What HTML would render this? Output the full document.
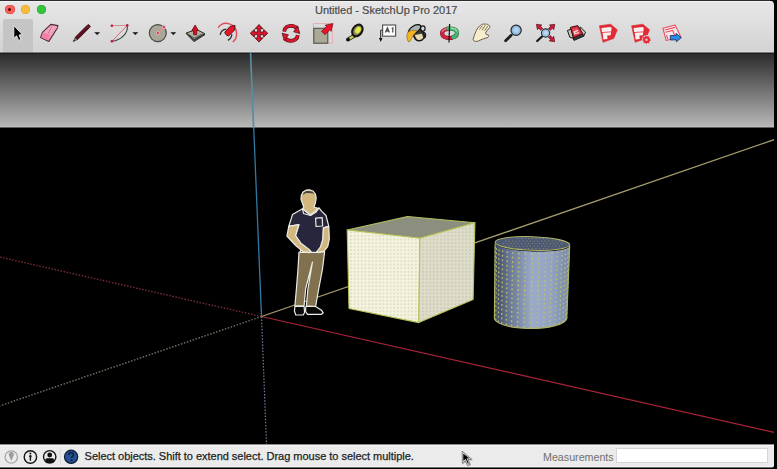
<!DOCTYPE html>
<html><head><meta charset="utf-8">
<style>
html,body{margin:0;padding:0;width:777px;height:469px;overflow:hidden;background:#000;font-family:"Liberation Sans",sans-serif;}
#row0{position:absolute;left:0;top:0;width:770px;height:1px;background:#2e2e2e;}
#win{position:absolute;left:0;top:1px;width:774px;height:467px;border-radius:0 4px 3px 0;overflow:hidden;background:#000;}
#top{position:absolute;left:0;top:0;width:774px;height:51px;background:linear-gradient(#e7e7e7,#d3d3d3);}
#tophl{position:absolute;left:0;top:0;width:774px;height:1px;background:#f2f2f2;}
#tophl2{position:absolute;left:0;top:50px;width:774px;height:1px;background:#dcdcdc;}
#title{position:absolute;left:315px;top:3px;font-size:11px;color:#4b4b4b;white-space:nowrap;-webkit-text-stroke:0.2px #4b4b4b;}
.tl{position:absolute;top:3.9px;width:9.6px;height:9.6px;border-radius:50%;}
#sel{position:absolute;left:2.5px;top:18px;width:30.5px;height:33px;border-radius:2px 2px 0 0;background:#c5c5c5;}
#status{position:absolute;left:0;top:443px;width:774px;height:24px;background:linear-gradient(#8a8a8a 0,#8a8a8a 1px,#f6f6f6 1px,#f6f6f6 2px,#ebebeb 2px,#ebebeb 22px,#f6f6f6 22px,#f6f6f6 23px,#6a6a6a 23px);}
#stext{position:absolute;left:84.6px;top:6.4px;font-size:11px;color:#1e1e1e;white-space:nowrap;-webkit-text-stroke:0.25px #1e1e1e;letter-spacing:-0.022px;}
#mtext{position:absolute;left:543px;top:7px;font-size:10.7px;color:#707070;white-space:nowrap;}
#mbox{position:absolute;left:616.5px;top:4.5px;width:150px;height:13.5px;background:#fff;box-shadow:0 0 0 1px #d4d4d4;}
svg{position:absolute;left:0;top:0;}
</style></head><body>
<div id="row0"></div>
<div id="win">
  <div id="top">
    <div id="tophl"></div><div id="tophl2"></div>
    <div class="tl" style="left:5px;background:#f8605a;box-shadow:inset 0 0 0 0.6px #e0443e;"><div style="position:absolute;left:3.1px;top:3.1px;width:3.4px;height:3.4px;border-radius:50%;background:#5a0606;"></div></div>
    <div class="tl" style="left:20.9px;background:#fbbb3a;box-shadow:inset 0 0 0 0.6px #dea030;"></div>
    <div class="tl" style="left:36.7px;background:#34c43e;box-shadow:inset 0 0 0 0.6px #24a830;"></div>
    <div id="title">Untitled - SketchUp Pro 2017</div>
    <div id="sel"></div>
  </div>
  <div id="status">
    <div id="stext">Select objects. Shift to extend select. Drag mouse to select multiple.</div>
    <div id="mtext">Measurements</div>
    <div id="mbox"></div>
  </div>
</div>
<svg id="scene" width="777" height="469" viewBox="0 0 777 469" style="position:absolute;left:0;top:0">
<defs>
<clipPath id="vpc"><rect x="0" y="52" width="774" height="392"/></clipPath>
<linearGradient id="skyg" x1="0" y1="0" x2="0" y2="1"><stop offset="0" stop-color="#2c2c2c"/><stop offset="1" stop-color="#b6b6b6"/></linearGradient>
<pattern id="dots" width="3.6" height="3.6" patternUnits="userSpaceOnUse"><circle cx="1.8" cy="1.8" r="0.6" fill="#8a8a70"/></pattern>
<pattern id="cdots" width="4.6" height="4.4" patternUnits="userSpaceOnUse"><circle cx="2.3" cy="2.2" r="0.8" fill="#b8c070"/></pattern>
<linearGradient id="cylg" x1="0" y1="0" x2="1" y2="0"><stop offset="0" stop-color="#3e4862"/><stop offset="0.2" stop-color="#6a7894"/><stop offset="0.5" stop-color="#9aaac8"/><stop offset="0.75" stop-color="#94a4c2"/><stop offset="1" stop-color="#7888a8"/></linearGradient>
</defs>
<g clip-path="url(#vpc)">
<rect x="0" y="52" width="774" height="392" fill="#000"/>
<rect x="0" y="52" width="774" height="1" fill="#7a7a7a"/>
<rect x="0" y="53" width="774" height="1" fill="#1e1e1e"/>
<rect x="0" y="54" width="774" height="72" fill="url(#skyg)"/>
<rect x="0" y="126" width="774" height="1" fill="#bcbcbc"/>
<rect x="0" y="127" width="774" height="1" fill="#5e5e5e"/>
<!-- axes -->
<line x1="261.5" y1="316.5" x2="253.7" y2="127.5" stroke="#3378a4" stroke-width="1.3"/>
<line x1="253.6" y1="128" x2="250.5" y2="52" stroke="#5a8ca0" stroke-width="1.7"/>
<line x1="261.5" y1="316.5" x2="774" y2="432.3" stroke="#a82438" stroke-width="1.2"/>
<line x1="261.5" y1="316.5" x2="774" y2="139.7" stroke="#a49c6c" stroke-width="1.3"/>
<line x1="261.5" y1="316.5" x2="0" y2="257.1" stroke="#80303a" stroke-width="1.3" stroke-dasharray="1.5 1.6"/>
<line x1="261.5" y1="316.5" x2="0" y2="405.9" stroke="#7c7a6c" stroke-width="1.3" stroke-dasharray="1.5 1.6"/>
<line x1="261.5" y1="316.5" x2="266.5" y2="444" stroke="#74819a" stroke-width="1.2" stroke-dasharray="1.5 1.6"/>
</g>
<!-- person -->
<g stroke="#ecece6" stroke-width="1.2" stroke-linejoin="round">
<path d="M299,252 L298,269 L296.4,289 L294.9,305.8 L304.1,305.8 L305.6,289 L312.5,262 L307.9,289 L306.4,305.8 L315.6,306.5 L318.7,289 L322.5,269 L324.6,251.6 Z" fill="#82714e"/>
<path d="M294.9,306.5 L304.1,306.5 L304.6,312.5 L303.2,315 L295.8,315 L294.4,311 Z" fill="#080808"/>
<path d="M305.8,306.5 L315.6,306.5 L321.5,310.2 L323.2,312.8 L321.5,314.3 L307.5,314.3 L305.6,311.5 Z" fill="#080808"/>
<path d="M292.5,214.6 L302.5,208.8 L310.5,215 L319,207.8 L321.3,210.9 L326,215.5 L328.8,226.3 L323.4,227.9 L322.9,239.2 L321.5,247 L320,252.4 L300.5,252.4 L300.6,243 L295.5,235.5 L298.9,224.7 L288.8,226.3 Z" fill="#27263c"/>
<path d="M288.8,226.3 L298.9,224.7 L295.5,235.5 L300.6,243 L308.5,249 L311,251.5 L309,252.6 L303,251.6 L295.7,245.5 L286.9,236 Z" fill="#d2b87f"/>
<path d="M323.4,227.9 L328.8,226.3 L329.3,239.1 L327.7,246.6 L324.2,251 L318.5,252.6 L316.8,251.5 L320.4,247 L322.9,239.2 Z" fill="#d2b87f"/>
<path d="M303.8,207.2 L302.2,202.5 L301,199.5 L301.3,195.5 L303,192 L306,190.2 L309.5,189.8 L313,191 L315.4,194 L316.2,198 L315.5,202.5 L314,207 L318.6,208.5 L310.5,215 L302.5,208.8 Z" fill="#d2b87f"/>
<path d="M302.5,208.8 L303.5,213.5 L310.5,215.5 L316.2,212 L318.6,208.2" fill="none"/>
<path d="M315.6,218.2 L322.2,217.6 L322.6,226 L316,226.5 Z" fill="#27263c"/>
</g>
<path d="M302.6,195 L303.8,192.4 L306.4,191.1 L309.6,190.9 L312.8,191.8 L314.6,194.4 L312.5,193.2 L306,193 Z" fill="#4a443a"/>
<!-- cube -->
<g stroke="#b8c05a" stroke-width="1.1" stroke-linejoin="round">
<path d="M347.2,230 L407.5,216.5 L474.9,222.8 L419.9,238.2 Z" fill="#8c8e7e"/>
<path d="M347.2,230 L419.9,238.2 L418.8,322.6 L349,308.5 Z" fill="#f4f4de"/>
<path d="M419.9,238.2 L474.9,222.8 L473.1,299.6 L418.8,322.6 Z" fill="#deddca"/>
</g>
<g fill="url(#dots)" opacity="0.55">
<path d="M348,231 L419.2,239 L418.2,321.6 L349.6,307.6 Z"/>
<path d="M420.6,239 L474.2,224 L472.4,299 L419.4,321.6 Z"/>
</g>
<!-- cylinder -->
<path d="M495.1,243.4 L494.4,316.8 A36.2,10.8 0 0 0 566.8,318.5 L569.7,245.7 A37.3,6.8 2 0 1 495.1,243.4 Z" fill="url(#cylg)"/>
<g fill="#bcc26c" opacity="0.9"><ellipse cx="495.2" cy="247.7" rx="0.60" ry="1.05"/><ellipse cx="495.2" cy="252.1" rx="0.60" ry="1.05"/><ellipse cx="495.2" cy="256.5" rx="0.60" ry="1.05"/><ellipse cx="495.1" cy="260.8" rx="0.60" ry="1.05"/><ellipse cx="495.1" cy="265.2" rx="0.60" ry="1.05"/><ellipse cx="495.0" cy="269.5" rx="0.60" ry="1.05"/><ellipse cx="495.0" cy="273.9" rx="0.60" ry="1.05"/><ellipse cx="494.9" cy="278.3" rx="0.60" ry="1.05"/><ellipse cx="494.9" cy="282.6" rx="0.60" ry="1.05"/><ellipse cx="494.9" cy="287.0" rx="0.60" ry="1.05"/><ellipse cx="494.8" cy="291.3" rx="0.60" ry="1.05"/><ellipse cx="494.8" cy="295.7" rx="0.60" ry="1.05"/><ellipse cx="494.7" cy="300.1" rx="0.60" ry="1.05"/><ellipse cx="494.7" cy="304.4" rx="0.60" ry="1.05"/><ellipse cx="494.6" cy="308.8" rx="0.60" ry="1.05"/><ellipse cx="494.6" cy="313.1" rx="0.60" ry="1.05"/><ellipse cx="494.6" cy="317.5" rx="0.60" ry="1.05"/><ellipse cx="496.5" cy="249.0" rx="0.67" ry="1.05"/><ellipse cx="496.5" cy="253.4" rx="0.67" ry="1.05"/><ellipse cx="496.4" cy="257.8" rx="0.67" ry="1.05"/><ellipse cx="496.4" cy="262.2" rx="0.67" ry="1.05"/><ellipse cx="496.3" cy="266.6" rx="0.67" ry="1.05"/><ellipse cx="496.3" cy="271.0" rx="0.67" ry="1.05"/><ellipse cx="496.2" cy="275.4" rx="0.67" ry="1.05"/><ellipse cx="496.2" cy="279.8" rx="0.67" ry="1.05"/><ellipse cx="496.1" cy="284.2" rx="0.67" ry="1.05"/><ellipse cx="496.1" cy="288.6" rx="0.67" ry="1.05"/><ellipse cx="496.1" cy="293.0" rx="0.67" ry="1.05"/><ellipse cx="496.0" cy="297.4" rx="0.67" ry="1.05"/><ellipse cx="496.0" cy="301.8" rx="0.67" ry="1.05"/><ellipse cx="495.9" cy="306.2" rx="0.67" ry="1.05"/><ellipse cx="495.9" cy="310.6" rx="0.67" ry="1.05"/><ellipse cx="495.8" cy="315.0" rx="0.67" ry="1.05"/><ellipse cx="495.8" cy="319.4" rx="0.67" ry="1.05"/><ellipse cx="499.0" cy="250.2" rx="0.74" ry="1.05"/><ellipse cx="498.9" cy="254.6" rx="0.74" ry="1.05"/><ellipse cx="498.9" cy="259.1" rx="0.74" ry="1.05"/><ellipse cx="498.8" cy="263.5" rx="0.74" ry="1.05"/><ellipse cx="498.8" cy="268.0" rx="0.74" ry="1.05"/><ellipse cx="498.7" cy="272.4" rx="0.74" ry="1.05"/><ellipse cx="498.7" cy="276.8" rx="0.74" ry="1.05"/><ellipse cx="498.6" cy="281.3" rx="0.74" ry="1.05"/><ellipse cx="498.6" cy="285.7" rx="0.74" ry="1.05"/><ellipse cx="498.5" cy="290.2" rx="0.74" ry="1.05"/><ellipse cx="498.5" cy="294.6" rx="0.74" ry="1.05"/><ellipse cx="498.4" cy="299.0" rx="0.74" ry="1.05"/><ellipse cx="498.4" cy="303.5" rx="0.74" ry="1.05"/><ellipse cx="498.4" cy="307.9" rx="0.74" ry="1.05"/><ellipse cx="498.3" cy="312.4" rx="0.74" ry="1.05"/><ellipse cx="498.3" cy="316.8" rx="0.74" ry="1.05"/><ellipse cx="498.2" cy="321.2" rx="0.74" ry="1.05"/><ellipse cx="502.6" cy="251.3" rx="0.78" ry="1.05"/><ellipse cx="502.5" cy="255.8" rx="0.78" ry="1.05"/><ellipse cx="502.5" cy="260.2" rx="0.78" ry="1.05"/><ellipse cx="502.4" cy="264.7" rx="0.78" ry="1.05"/><ellipse cx="502.4" cy="269.2" rx="0.78" ry="1.05"/><ellipse cx="502.3" cy="273.7" rx="0.78" ry="1.05"/><ellipse cx="502.3" cy="278.1" rx="0.78" ry="1.05"/><ellipse cx="502.2" cy="282.6" rx="0.78" ry="1.05"/><ellipse cx="502.2" cy="287.1" rx="0.78" ry="1.05"/><ellipse cx="502.1" cy="291.6" rx="0.78" ry="1.05"/><ellipse cx="502.1" cy="296.0" rx="0.78" ry="1.05"/><ellipse cx="502.0" cy="300.5" rx="0.78" ry="1.05"/><ellipse cx="501.9" cy="305.0" rx="0.78" ry="1.05"/><ellipse cx="501.9" cy="309.5" rx="0.78" ry="1.05"/><ellipse cx="501.8" cy="313.9" rx="0.78" ry="1.05"/><ellipse cx="501.8" cy="318.4" rx="0.78" ry="1.05"/><ellipse cx="501.7" cy="322.9" rx="0.78" ry="1.05"/><ellipse cx="507.2" cy="252.2" rx="0.84" ry="1.05"/><ellipse cx="507.2" cy="256.7" rx="0.84" ry="1.05"/><ellipse cx="507.1" cy="261.2" rx="0.84" ry="1.05"/><ellipse cx="507.0" cy="265.7" rx="0.84" ry="1.05"/><ellipse cx="507.0" cy="270.3" rx="0.84" ry="1.05"/><ellipse cx="506.9" cy="274.8" rx="0.84" ry="1.05"/><ellipse cx="506.9" cy="279.3" rx="0.84" ry="1.05"/><ellipse cx="506.8" cy="283.8" rx="0.84" ry="1.05"/><ellipse cx="506.7" cy="288.3" rx="0.84" ry="1.05"/><ellipse cx="506.7" cy="292.8" rx="0.84" ry="1.05"/><ellipse cx="506.6" cy="297.3" rx="0.84" ry="1.05"/><ellipse cx="506.5" cy="301.8" rx="0.84" ry="1.05"/><ellipse cx="506.5" cy="306.3" rx="0.84" ry="1.05"/><ellipse cx="506.4" cy="310.8" rx="0.84" ry="1.05"/><ellipse cx="506.4" cy="315.3" rx="0.84" ry="1.05"/><ellipse cx="506.3" cy="319.8" rx="0.84" ry="1.05"/><ellipse cx="506.2" cy="324.3" rx="0.84" ry="1.05"/><ellipse cx="512.7" cy="253.0" rx="0.87" ry="1.05"/><ellipse cx="512.6" cy="257.5" rx="0.87" ry="1.05"/><ellipse cx="512.6" cy="262.1" rx="0.87" ry="1.05"/><ellipse cx="512.5" cy="266.6" rx="0.87" ry="1.05"/><ellipse cx="512.4" cy="271.1" rx="0.87" ry="1.05"/><ellipse cx="512.4" cy="275.7" rx="0.87" ry="1.05"/><ellipse cx="512.3" cy="280.2" rx="0.87" ry="1.05"/><ellipse cx="512.2" cy="284.7" rx="0.87" ry="1.05"/><ellipse cx="512.1" cy="289.3" rx="0.87" ry="1.05"/><ellipse cx="512.1" cy="293.8" rx="0.87" ry="1.05"/><ellipse cx="512.0" cy="298.3" rx="0.87" ry="1.05"/><ellipse cx="511.9" cy="302.8" rx="0.87" ry="1.05"/><ellipse cx="511.8" cy="307.4" rx="0.87" ry="1.05"/><ellipse cx="511.8" cy="311.9" rx="0.87" ry="1.05"/><ellipse cx="511.7" cy="316.4" rx="0.87" ry="1.05"/><ellipse cx="511.6" cy="321.0" rx="0.87" ry="1.05"/><ellipse cx="511.6" cy="325.5" rx="0.87" ry="1.05"/><ellipse cx="518.9" cy="253.6" rx="0.91" ry="1.05"/><ellipse cx="518.8" cy="258.1" rx="0.91" ry="1.05"/><ellipse cx="518.7" cy="262.7" rx="0.91" ry="1.05"/><ellipse cx="518.6" cy="267.2" rx="0.91" ry="1.05"/><ellipse cx="518.5" cy="271.8" rx="0.91" ry="1.05"/><ellipse cx="518.5" cy="276.3" rx="0.91" ry="1.05"/><ellipse cx="518.4" cy="280.9" rx="0.91" ry="1.05"/><ellipse cx="518.3" cy="285.4" rx="0.91" ry="1.05"/><ellipse cx="518.2" cy="290.0" rx="0.91" ry="1.05"/><ellipse cx="518.1" cy="294.5" rx="0.91" ry="1.05"/><ellipse cx="518.0" cy="299.1" rx="0.91" ry="1.05"/><ellipse cx="518.0" cy="303.6" rx="0.91" ry="1.05"/><ellipse cx="517.9" cy="308.2" rx="0.91" ry="1.05"/><ellipse cx="517.8" cy="312.7" rx="0.91" ry="1.05"/><ellipse cx="517.7" cy="317.3" rx="0.91" ry="1.05"/><ellipse cx="517.6" cy="321.8" rx="0.91" ry="1.05"/><ellipse cx="517.5" cy="326.4" rx="0.91" ry="1.05"/><ellipse cx="525.5" cy="253.9" rx="0.92" ry="1.05"/><ellipse cx="525.4" cy="258.5" rx="0.92" ry="1.05"/><ellipse cx="525.3" cy="263.0" rx="0.92" ry="1.05"/><ellipse cx="525.2" cy="267.6" rx="0.92" ry="1.05"/><ellipse cx="525.1" cy="272.2" rx="0.92" ry="1.05"/><ellipse cx="525.0" cy="276.7" rx="0.92" ry="1.05"/><ellipse cx="524.9" cy="281.3" rx="0.92" ry="1.05"/><ellipse cx="524.8" cy="285.9" rx="0.92" ry="1.05"/><ellipse cx="524.7" cy="290.4" rx="0.92" ry="1.05"/><ellipse cx="524.6" cy="295.0" rx="0.92" ry="1.05"/><ellipse cx="524.5" cy="299.5" rx="0.92" ry="1.05"/><ellipse cx="524.4" cy="304.1" rx="0.92" ry="1.05"/><ellipse cx="524.3" cy="308.7" rx="0.92" ry="1.05"/><ellipse cx="524.3" cy="313.2" rx="0.92" ry="1.05"/><ellipse cx="524.2" cy="317.8" rx="0.92" ry="1.05"/><ellipse cx="524.1" cy="322.3" rx="0.92" ry="1.05"/><ellipse cx="524.0" cy="326.9" rx="0.92" ry="1.05"/><ellipse cx="532.3" cy="254.0" rx="0.93" ry="1.05"/><ellipse cx="532.2" cy="258.6" rx="0.93" ry="1.05"/><ellipse cx="532.1" cy="263.2" rx="0.93" ry="1.05"/><ellipse cx="532.0" cy="267.7" rx="0.93" ry="1.05"/><ellipse cx="531.9" cy="272.3" rx="0.93" ry="1.05"/><ellipse cx="531.8" cy="276.9" rx="0.93" ry="1.05"/><ellipse cx="531.7" cy="281.4" rx="0.93" ry="1.05"/><ellipse cx="531.6" cy="286.0" rx="0.93" ry="1.05"/><ellipse cx="531.5" cy="290.6" rx="0.93" ry="1.05"/><ellipse cx="531.4" cy="295.1" rx="0.93" ry="1.05"/><ellipse cx="531.3" cy="299.7" rx="0.93" ry="1.05"/><ellipse cx="531.2" cy="304.3" rx="0.93" ry="1.05"/><ellipse cx="531.0" cy="308.8" rx="0.93" ry="1.05"/><ellipse cx="530.9" cy="313.4" rx="0.93" ry="1.05"/><ellipse cx="530.8" cy="318.0" rx="0.93" ry="1.05"/><ellipse cx="530.7" cy="322.5" rx="0.93" ry="1.05"/><ellipse cx="530.6" cy="327.1" rx="0.93" ry="1.05"/><ellipse cx="539.2" cy="253.9" rx="0.92" ry="1.05"/><ellipse cx="539.1" cy="258.5" rx="0.92" ry="1.05"/><ellipse cx="538.9" cy="263.0" rx="0.92" ry="1.05"/><ellipse cx="538.8" cy="267.6" rx="0.92" ry="1.05"/><ellipse cx="538.7" cy="272.2" rx="0.92" ry="1.05"/><ellipse cx="538.6" cy="276.7" rx="0.92" ry="1.05"/><ellipse cx="538.5" cy="281.3" rx="0.92" ry="1.05"/><ellipse cx="538.3" cy="285.9" rx="0.92" ry="1.05"/><ellipse cx="538.2" cy="290.4" rx="0.92" ry="1.05"/><ellipse cx="538.1" cy="295.0" rx="0.92" ry="1.05"/><ellipse cx="538.0" cy="299.5" rx="0.92" ry="1.05"/><ellipse cx="537.9" cy="304.1" rx="0.92" ry="1.05"/><ellipse cx="537.8" cy="308.7" rx="0.92" ry="1.05"/><ellipse cx="537.6" cy="313.2" rx="0.92" ry="1.05"/><ellipse cx="537.5" cy="317.8" rx="0.92" ry="1.05"/><ellipse cx="537.4" cy="322.3" rx="0.92" ry="1.05"/><ellipse cx="537.3" cy="326.9" rx="0.92" ry="1.05"/><ellipse cx="545.8" cy="253.6" rx="0.91" ry="1.05"/><ellipse cx="545.7" cy="258.1" rx="0.91" ry="1.05"/><ellipse cx="545.5" cy="262.7" rx="0.91" ry="1.05"/><ellipse cx="545.4" cy="267.2" rx="0.91" ry="1.05"/><ellipse cx="545.3" cy="271.8" rx="0.91" ry="1.05"/><ellipse cx="545.1" cy="276.3" rx="0.91" ry="1.05"/><ellipse cx="545.0" cy="280.9" rx="0.91" ry="1.05"/><ellipse cx="544.9" cy="285.4" rx="0.91" ry="1.05"/><ellipse cx="544.7" cy="290.0" rx="0.91" ry="1.05"/><ellipse cx="544.6" cy="294.5" rx="0.91" ry="1.05"/><ellipse cx="544.5" cy="299.1" rx="0.91" ry="1.05"/><ellipse cx="544.4" cy="303.6" rx="0.91" ry="1.05"/><ellipse cx="544.2" cy="308.2" rx="0.91" ry="1.05"/><ellipse cx="544.1" cy="312.7" rx="0.91" ry="1.05"/><ellipse cx="544.0" cy="317.3" rx="0.91" ry="1.05"/><ellipse cx="543.8" cy="321.8" rx="0.91" ry="1.05"/><ellipse cx="543.7" cy="326.4" rx="0.91" ry="1.05"/><ellipse cx="552.0" cy="253.0" rx="0.87" ry="1.05"/><ellipse cx="551.8" cy="257.5" rx="0.87" ry="1.05"/><ellipse cx="551.7" cy="262.1" rx="0.87" ry="1.05"/><ellipse cx="551.5" cy="266.6" rx="0.87" ry="1.05"/><ellipse cx="551.4" cy="271.1" rx="0.87" ry="1.05"/><ellipse cx="551.2" cy="275.7" rx="0.87" ry="1.05"/><ellipse cx="551.1" cy="280.2" rx="0.87" ry="1.05"/><ellipse cx="551.0" cy="284.7" rx="0.87" ry="1.05"/><ellipse cx="550.8" cy="289.3" rx="0.87" ry="1.05"/><ellipse cx="550.7" cy="293.8" rx="0.87" ry="1.05"/><ellipse cx="550.5" cy="298.3" rx="0.87" ry="1.05"/><ellipse cx="550.4" cy="302.8" rx="0.87" ry="1.05"/><ellipse cx="550.3" cy="307.4" rx="0.87" ry="1.05"/><ellipse cx="550.1" cy="311.9" rx="0.87" ry="1.05"/><ellipse cx="550.0" cy="316.4" rx="0.87" ry="1.05"/><ellipse cx="549.8" cy="321.0" rx="0.87" ry="1.05"/><ellipse cx="549.7" cy="325.5" rx="0.87" ry="1.05"/><ellipse cx="557.4" cy="252.2" rx="0.84" ry="1.05"/><ellipse cx="557.3" cy="256.7" rx="0.84" ry="1.05"/><ellipse cx="557.1" cy="261.2" rx="0.84" ry="1.05"/><ellipse cx="557.0" cy="265.7" rx="0.84" ry="1.05"/><ellipse cx="556.8" cy="270.3" rx="0.84" ry="1.05"/><ellipse cx="556.7" cy="274.8" rx="0.84" ry="1.05"/><ellipse cx="556.5" cy="279.3" rx="0.84" ry="1.05"/><ellipse cx="556.4" cy="283.8" rx="0.84" ry="1.05"/><ellipse cx="556.2" cy="288.3" rx="0.84" ry="1.05"/><ellipse cx="556.1" cy="292.8" rx="0.84" ry="1.05"/><ellipse cx="555.9" cy="297.3" rx="0.84" ry="1.05"/><ellipse cx="555.8" cy="301.8" rx="0.84" ry="1.05"/><ellipse cx="555.6" cy="306.3" rx="0.84" ry="1.05"/><ellipse cx="555.5" cy="310.8" rx="0.84" ry="1.05"/><ellipse cx="555.3" cy="315.3" rx="0.84" ry="1.05"/><ellipse cx="555.2" cy="319.8" rx="0.84" ry="1.05"/><ellipse cx="555.0" cy="324.3" rx="0.84" ry="1.05"/><ellipse cx="562.1" cy="251.3" rx="0.78" ry="1.05"/><ellipse cx="561.9" cy="255.8" rx="0.78" ry="1.05"/><ellipse cx="561.8" cy="260.2" rx="0.78" ry="1.05"/><ellipse cx="561.6" cy="264.7" rx="0.78" ry="1.05"/><ellipse cx="561.4" cy="269.2" rx="0.78" ry="1.05"/><ellipse cx="561.3" cy="273.7" rx="0.78" ry="1.05"/><ellipse cx="561.1" cy="278.1" rx="0.78" ry="1.05"/><ellipse cx="561.0" cy="282.6" rx="0.78" ry="1.05"/><ellipse cx="560.8" cy="287.1" rx="0.78" ry="1.05"/><ellipse cx="560.6" cy="291.6" rx="0.78" ry="1.05"/><ellipse cx="560.5" cy="296.0" rx="0.78" ry="1.05"/><ellipse cx="560.3" cy="300.5" rx="0.78" ry="1.05"/><ellipse cx="560.2" cy="305.0" rx="0.78" ry="1.05"/><ellipse cx="560.0" cy="309.5" rx="0.78" ry="1.05"/><ellipse cx="559.8" cy="313.9" rx="0.78" ry="1.05"/><ellipse cx="559.7" cy="318.4" rx="0.78" ry="1.05"/><ellipse cx="559.5" cy="322.9" rx="0.78" ry="1.05"/><ellipse cx="565.7" cy="250.2" rx="0.74" ry="1.05"/><ellipse cx="565.5" cy="254.6" rx="0.74" ry="1.05"/><ellipse cx="565.4" cy="259.1" rx="0.74" ry="1.05"/><ellipse cx="565.2" cy="263.5" rx="0.74" ry="1.05"/><ellipse cx="565.0" cy="268.0" rx="0.74" ry="1.05"/><ellipse cx="564.9" cy="272.4" rx="0.74" ry="1.05"/><ellipse cx="564.7" cy="276.8" rx="0.74" ry="1.05"/><ellipse cx="564.5" cy="281.3" rx="0.74" ry="1.05"/><ellipse cx="564.4" cy="285.7" rx="0.74" ry="1.05"/><ellipse cx="564.2" cy="290.2" rx="0.74" ry="1.05"/><ellipse cx="564.0" cy="294.6" rx="0.74" ry="1.05"/><ellipse cx="563.9" cy="299.0" rx="0.74" ry="1.05"/><ellipse cx="563.7" cy="303.5" rx="0.74" ry="1.05"/><ellipse cx="563.5" cy="307.9" rx="0.74" ry="1.05"/><ellipse cx="563.4" cy="312.4" rx="0.74" ry="1.05"/><ellipse cx="563.2" cy="316.8" rx="0.74" ry="1.05"/><ellipse cx="563.0" cy="321.2" rx="0.74" ry="1.05"/><ellipse cx="568.2" cy="249.0" rx="0.67" ry="1.05"/><ellipse cx="568.0" cy="253.4" rx="0.67" ry="1.05"/><ellipse cx="567.8" cy="257.8" rx="0.67" ry="1.05"/><ellipse cx="567.7" cy="262.2" rx="0.67" ry="1.05"/><ellipse cx="567.5" cy="266.6" rx="0.67" ry="1.05"/><ellipse cx="567.3" cy="271.0" rx="0.67" ry="1.05"/><ellipse cx="567.2" cy="275.4" rx="0.67" ry="1.05"/><ellipse cx="567.0" cy="279.8" rx="0.67" ry="1.05"/><ellipse cx="566.8" cy="284.2" rx="0.67" ry="1.05"/><ellipse cx="566.6" cy="288.6" rx="0.67" ry="1.05"/><ellipse cx="566.5" cy="293.0" rx="0.67" ry="1.05"/><ellipse cx="566.3" cy="297.4" rx="0.67" ry="1.05"/><ellipse cx="566.1" cy="301.8" rx="0.67" ry="1.05"/><ellipse cx="566.0" cy="306.2" rx="0.67" ry="1.05"/><ellipse cx="565.8" cy="310.6" rx="0.67" ry="1.05"/><ellipse cx="565.6" cy="315.0" rx="0.67" ry="1.05"/><ellipse cx="565.5" cy="319.4" rx="0.67" ry="1.05"/><ellipse cx="569.4" cy="247.7" rx="0.60" ry="1.05"/><ellipse cx="569.3" cy="252.1" rx="0.60" ry="1.05"/><ellipse cx="569.1" cy="256.5" rx="0.60" ry="1.05"/><ellipse cx="568.9" cy="260.8" rx="0.60" ry="1.05"/><ellipse cx="568.7" cy="265.2" rx="0.60" ry="1.05"/><ellipse cx="568.6" cy="269.5" rx="0.60" ry="1.05"/><ellipse cx="568.4" cy="273.9" rx="0.60" ry="1.05"/><ellipse cx="568.2" cy="278.3" rx="0.60" ry="1.05"/><ellipse cx="568.1" cy="282.6" rx="0.60" ry="1.05"/><ellipse cx="567.9" cy="287.0" rx="0.60" ry="1.05"/><ellipse cx="567.7" cy="291.3" rx="0.60" ry="1.05"/><ellipse cx="567.5" cy="295.7" rx="0.60" ry="1.05"/><ellipse cx="567.4" cy="300.1" rx="0.60" ry="1.05"/><ellipse cx="567.2" cy="304.4" rx="0.60" ry="1.05"/><ellipse cx="567.0" cy="308.8" rx="0.60" ry="1.05"/><ellipse cx="566.9" cy="313.1" rx="0.60" ry="1.05"/><ellipse cx="566.7" cy="317.5" rx="0.60" ry="1.05"/></g>
<ellipse cx="532.4" cy="243.5" rx="37.3" ry="6.8" transform="rotate(2 532.4 243.5)" fill="#4e5a74"/>
<g fill="#9aa070" opacity="0.8"><circle cx="505.4" cy="241.0" r="0.6"/><circle cx="503.6" cy="243.5" r="0.6"/><circle cx="505.4" cy="246.0" r="0.6"/><circle cx="509.0" cy="241.0" r="0.6"/><circle cx="507.2" cy="243.5" r="0.6"/><circle cx="509.0" cy="246.0" r="0.6"/><circle cx="512.6" cy="241.0" r="0.6"/><circle cx="510.8" cy="243.5" r="0.6"/><circle cx="512.6" cy="246.0" r="0.6"/><circle cx="516.2" cy="241.0" r="0.6"/><circle cx="514.4" cy="243.5" r="0.6"/><circle cx="516.2" cy="246.0" r="0.6"/><circle cx="518.0" cy="238.5" r="0.6"/><circle cx="519.8" cy="241.0" r="0.6"/><circle cx="518.0" cy="243.5" r="0.6"/><circle cx="519.8" cy="246.0" r="0.6"/><circle cx="518.0" cy="248.5" r="0.6"/><circle cx="521.6" cy="238.5" r="0.6"/><circle cx="523.4" cy="241.0" r="0.6"/><circle cx="521.6" cy="243.5" r="0.6"/><circle cx="523.4" cy="246.0" r="0.6"/><circle cx="521.6" cy="248.5" r="0.6"/><circle cx="525.2" cy="238.5" r="0.6"/><circle cx="527.0" cy="241.0" r="0.6"/><circle cx="525.2" cy="243.5" r="0.6"/><circle cx="527.0" cy="246.0" r="0.6"/><circle cx="525.2" cy="248.5" r="0.6"/><circle cx="528.8" cy="238.5" r="0.6"/><circle cx="530.6" cy="241.0" r="0.6"/><circle cx="528.8" cy="243.5" r="0.6"/><circle cx="530.6" cy="246.0" r="0.6"/><circle cx="528.8" cy="248.5" r="0.6"/><circle cx="532.4" cy="238.5" r="0.6"/><circle cx="534.2" cy="241.0" r="0.6"/><circle cx="532.4" cy="243.5" r="0.6"/><circle cx="534.2" cy="246.0" r="0.6"/><circle cx="532.4" cy="248.5" r="0.6"/><circle cx="536.0" cy="238.5" r="0.6"/><circle cx="537.8" cy="241.0" r="0.6"/><circle cx="536.0" cy="243.5" r="0.6"/><circle cx="537.8" cy="246.0" r="0.6"/><circle cx="536.0" cy="248.5" r="0.6"/><circle cx="539.6" cy="238.5" r="0.6"/><circle cx="541.4" cy="241.0" r="0.6"/><circle cx="539.6" cy="243.5" r="0.6"/><circle cx="541.4" cy="246.0" r="0.6"/><circle cx="539.6" cy="248.5" r="0.6"/><circle cx="543.2" cy="238.5" r="0.6"/><circle cx="545.0" cy="241.0" r="0.6"/><circle cx="543.2" cy="243.5" r="0.6"/><circle cx="545.0" cy="246.0" r="0.6"/><circle cx="543.2" cy="248.5" r="0.6"/><circle cx="546.8" cy="238.5" r="0.6"/><circle cx="548.6" cy="241.0" r="0.6"/><circle cx="546.8" cy="243.5" r="0.6"/><circle cx="548.6" cy="246.0" r="0.6"/><circle cx="546.8" cy="248.5" r="0.6"/><circle cx="552.2" cy="241.0" r="0.6"/><circle cx="550.4" cy="243.5" r="0.6"/><circle cx="552.2" cy="246.0" r="0.6"/><circle cx="555.8" cy="241.0" r="0.6"/><circle cx="554.0" cy="243.5" r="0.6"/><circle cx="555.8" cy="246.0" r="0.6"/><circle cx="559.4" cy="241.0" r="0.6"/><circle cx="557.6" cy="243.5" r="0.6"/><circle cx="559.4" cy="246.0" r="0.6"/><circle cx="561.2" cy="243.5" r="0.6"/></g>
<g fill="none" stroke="#b0b466" stroke-width="1.1">
<path d="M495.1,243.4 L494.4,316.8 A36.2,10.8 0 0 0 566.8,318.5 L569.7,245.7"/>
<ellipse cx="532.4" cy="243.5" rx="37.3" ry="6.8" transform="rotate(2 532.4 243.5)"/>
</g>
</svg>

<svg id="tb" width="777" height="52" viewBox="0 0 777 52" style="position:absolute;left:0;top:0">
<!-- select arrow -->
<path d="M13.8,25.6 L13.8,38.4 L16.6,35.8 L18.6,40.4 L21,39.4 L19,35 L22.4,34.6 Z" fill="#000" stroke="#fff" stroke-width="0.8" stroke-linejoin="round"/>
<!-- eraser -->
<path d="M40.6,37.6 L42.4,32.4 L50.8,24.4 L57.9,25.6 L57.4,28 L48.8,41.4 Z" fill="#f2a6c0" stroke="#4a2832" stroke-width="1.1" stroke-linejoin="round"/>
<path d="M41.2,37.4 L42.8,33 L50,34.6 L48.4,40.6 Z" fill="#f47ea6"/>
<path d="M42.8,33 L50,34.6 L57.4,27" fill="none" stroke="#e88aa8" stroke-width="0.7"/>
<path d="M50.5,28.2 L51.8,27.2 M49.2,30.6 L50.6,29.6 M48,32.6 L49.2,31.8" stroke="#a04860" stroke-width="0.9"/>
<!-- pencil -->
<g transform="translate(73.2,41.6) rotate(-45)">
<path d="M0,0 L4.4,-1.6 L4.4,1.6 Z" fill="#8a8070" stroke="#2a2a2a" stroke-width="0.5"/>
<path d="M0,0 L2,-0.75 L2,0.75 Z" fill="#1a1a1a"/>
<rect x="4.4" y="-1.65" width="18.6" height="3.3" rx="1" fill="#5e1020" stroke="#2a060c" stroke-width="0.7"/>
<line x1="21" y1="-1" x2="21" y2="1" stroke="#a86070" stroke-width="0.6"/>
</g>
<path d="M94.2,32.3 L100.1,32.3 L97.15,35.1 Z" fill="#111"/>
<!-- arc -->
<path d="M111.9,25.7 L127.3,25.4" fill="none" stroke="#d09088" stroke-width="1"/>
<path d="M127.3,25.4 L111.9,41.2" fill="none" stroke="#d83050" stroke-width="0.7"/>
<path d="M127.3,25.4 C128.5,33 121,40.5 111.9,41.2" fill="none" stroke="#354538" stroke-width="1.1"/>
<circle cx="111.9" cy="25.7" r="1.3" fill="#b81c40"/><circle cx="127.3" cy="25.4" r="1.3" fill="#b81c40"/><circle cx="111.9" cy="41.2" r="1.3" fill="#b81c40"/>
<path d="M132.3,32.3 L138.3,32.3 L135.3,35.1 Z" fill="#111"/>
<!-- circle -->
<circle cx="157.8" cy="33.1" r="8.5" fill="#a9a898" stroke="#4a4a48" stroke-width="1.2"/>
<line x1="157.8" y1="33.1" x2="163.9" y2="27" stroke="#f08898" stroke-width="1.2"/>
<circle cx="157.8" cy="33.1" r="1.9" fill="#f2b0b8"/><circle cx="163.9" cy="27" r="1.9" fill="#f2b0b8"/>
<circle cx="157.8" cy="33.1" r="1" fill="#c02040"/><circle cx="163.9" cy="27" r="1" fill="#c02040"/>
<path d="M170.4,32.2 L176.2,32.2 L173.3,35 Z" fill="#111"/>
<!-- push pull -->
<g stroke="#222" stroke-width="0.9" stroke-linejoin="round">
<path d="M186.1,33.4 L196.3,30.2 L205,34.6 L194,41.6 Z" fill="#555"/>
<path d="M186.4,33 L196.3,29.4 L204.8,33.6 L194.2,39.6 Z" fill="#b4b4a4"/>
</g>
<path d="M188.6,34.4 L194.2,38 M194.2,38 L202.4,33.8" fill="none" stroke="#3a3a3a" stroke-width="0.7"/>
<path d="M195.1,25 L198.4,30.6 L196.7,30.6 L196.7,34.8 L193.5,34.8 L193.5,30.6 L191.8,30.6 Z" fill="#d41020" stroke="#5a0810" stroke-width="0.7" stroke-linejoin="round"/>
<!-- offset / follow -->
<path d="M218.1,27.6 A10.2,10.2 0 0 1 236.6,33.5 A10.2,10.2 0 0 1 232.8,42" fill="none" stroke="#e24a58" stroke-width="1.4"/>
<path d="M220.2,34.8 A6.8,6.8 0 0 1 226.3,29.2" fill="none" stroke="#2e2e2e" stroke-width="1.3"/>
<path d="M231.8,34.3 A6.8,6.8 0 0 1 227.8,40.4" fill="none" stroke="#2e2e2e" stroke-width="1.3"/>
<g transform="translate(226.6,34.2) rotate(-46)">
<path d="M0,-2.7 L8.2,-2.9 L12.2,0 L8.2,2.9 L0,2.7 Q-1.6,0 0,-2.7 Z" fill="#e8142a" stroke="#3a0a0e" stroke-width="0.8" stroke-linejoin="round"/>
</g>
<!-- move -->
<path transform="translate(259,33.3)" d="M0,-8.8 L3.9,-4.6 L1.3,-4.6 L1.3,-1.3 L4.6,-1.3 L4.6,-3.9 L8.8,0 L4.6,3.9 L4.6,1.3 L1.3,1.3 L1.3,4.6 L3.9,4.6 L0,8.8 L-3.9,4.6 L-1.3,4.6 L-1.3,1.3 L-4.6,1.3 L-4.6,3.9 L-8.8,0 L-4.6,-3.9 L-4.6,-1.3 L-1.3,-1.3 L-1.3,-4.6 L-3.9,-4.6 Z" fill="#e0162e" stroke="#4a0810" stroke-width="0.8" stroke-linejoin="round"/>
<!-- rotate -->
<g fill="none" stroke-linecap="butt">
<path d="M284.2,31.5 C284.5,27.5 288,25.8 291,25.8 C294,25.8 296,27 297.2,28.6" stroke="#5a0a14" stroke-width="3.8"/>
<path d="M297.8,35 C297.5,39 294,40.8 291,40.8 C288,40.8 286,39.6 284.8,38" stroke="#5a0a14" stroke-width="3.8"/>
<path d="M284.2,31.5 C284.5,27.5 288,25.8 291,25.8 C294,25.8 296,27 297.2,28.6" stroke="#dc1830" stroke-width="2.6"/>
<path d="M297.8,35 C297.5,39 294,40.8 291,40.8 C288,40.8 286,39.6 284.8,38" stroke="#dc1830" stroke-width="2.6"/>
</g>
<path d="M299.8,33.5 L293.6,31.8 L297.6,25.8 Z" fill="#dc1830" stroke="#4a0810" stroke-width="0.7" stroke-linejoin="round"/>
<path d="M282,33.2 L288.4,34.8 L284.4,40.8 Z" fill="#dc1830" stroke="#4a0810" stroke-width="0.7" stroke-linejoin="round"/>
<!-- scale -->
<rect x="313.4" y="23.6" width="18.9" height="19.6" fill="none" stroke="#e8a8b0" stroke-width="0.9"/>
<rect x="313.8" y="28.3" width="14" height="14.9" fill="#aaa896" stroke="#50504a" stroke-width="1.1"/>
<g transform="translate(323.6,32.6) rotate(-44)">
<path d="M-0.5,-2.4 L6.2,-2.4 L6.2,-4.3 L13,0 L6.2,4.3 L6.2,2.4 L-0.5,2.4 Z" fill="#e8142a" stroke="#5a0a10" stroke-width="0.6" stroke-linejoin="round"/>
</g>
<!-- tape -->
<path d="M348.2,39.4 L354.6,35.6" stroke="#1a1a12" stroke-width="3.8" stroke-linecap="butt"/>
<path d="M349.4,38.7 L354.6,35.6" stroke="#c8d24a" stroke-width="2.3"/>
<circle cx="347.9" cy="39.6" r="1.9" fill="#111"/>
<ellipse cx="357.4" cy="30.4" rx="4.7" ry="6.3" transform="rotate(35 357.4 30.4)" fill="#8a8a5c" stroke="#141410" stroke-width="2"/>
<ellipse cx="358" cy="30.1" rx="2.4" ry="3.5" transform="rotate(35 358 30.1)" fill="#e4ee3c"/>
<!-- text -->
<rect x="382.6" y="25" width="13" height="11.2" fill="#fff" stroke="#5a5a5a" stroke-width="1.2"/>
<path d="M385.4,32.6 L387.4,27.9 L389.4,32.6 M386.2,31 L388.6,31 M391.8,28.8 L392.8,28 L392.8,32.6" fill="none" stroke="#505050" stroke-width="1.3"/>
<path d="M382.6,30.2 L380.7,30.2 L380.7,38.6" fill="none" stroke="#222" stroke-width="1"/>
<path d="M378.9,38.1 L382.5,38.1 L380.7,42 Z" fill="#111"/>
<!-- paint bucket -->
<ellipse cx="422.8" cy="28.6" rx="2.3" ry="2.7" fill="#d8d8d8" stroke="#1a1a1a" stroke-width="1.2"/>
<ellipse cx="423.2" cy="35.2" rx="2.4" ry="2.9" fill="#d8d8d8" stroke="#1a1a1a" stroke-width="1.2"/>
<path d="M418.2,26.6 L424,33.5 C425.4,37 423.2,40.8 419.5,40.9 C416.5,41 414.6,38.8 413.8,36.3 L411.2,31.8 Z" fill="#3c3a34" stroke="#141414" stroke-width="1.2" stroke-linejoin="round"/>
<path d="M414.8,35 L421.8,33.8 L423.2,37.6 C422.2,39.6 420.6,40 419,40 C417.2,40 415.8,38.5 414.8,35 Z" fill="#e6dab2"/>
<ellipse cx="414.6" cy="29.4" rx="7" ry="3.5" transform="rotate(-33 414.6 29.4)" fill="#a8b4b4" stroke="#141414" stroke-width="1.3"/>
<path d="M408.8,31.4 C412,30.2 415.6,30 417.2,31 C415,33.2 412.6,35.8 411.4,38.8 C410.8,40.4 409.8,41.8 408.8,42 C407.2,40.4 406.4,37 407,34.4 C407.4,33.2 408,32.2 408.8,31.4 Z" fill="#f2b420" stroke="#6a4a08" stroke-width="0.5"/>
<!-- orbit -->
<path d="M449,29 C444.6,29 442.2,30.8 442.2,33.4 C442.2,36.2 445.2,38 450,38 L453,38" fill="none" stroke="#7a1020" stroke-width="4.2"/>
<path d="M449,29 C444.6,29 442.2,30.8 442.2,33.4 C442.2,36.2 445.2,38 450,38 L452.6,38" fill="none" stroke="#d42242" stroke-width="3.2"/>
<path d="M448.5,28.4 C445.2,28.6 442.8,29.8 442.2,31.8" fill="none" stroke="#e88090" stroke-width="1.3"/>
<path d="M446.6,28.6 L450.2,28.6 C454.6,28.6 456.9,30.4 456.9,33 C456.9,35.6 454.8,37.2 451.6,37.4" fill="none" stroke="#1e6a3a" stroke-width="4.2"/>
<path d="M446.8,28.6 L450.2,28.6 C454.6,28.6 456.9,30.4 456.9,33 C456.9,35.6 454.8,37.2 451.8,37.4" fill="none" stroke="#48b474" stroke-width="3.2"/>
<path d="M450.5,28 C454,28.2 456.4,29.4 456.9,31.4" fill="none" stroke="#98e0b0" stroke-width="1.3"/>
<line x1="449.6" y1="24" x2="449" y2="42.6" stroke="#111" stroke-width="1.2"/>
<!-- hand -->
<path d="M473,39.5 C474.2,35.5 475.8,31 477.8,28 L480.5,25.2 C481.8,24.2 483.4,23.8 484.6,24.2 C486,23.8 487.6,24.2 488.2,25 C489.4,25.2 490.2,26.2 489.7,27.4 L486,32 C485.2,33.2 485.6,34.4 486.8,34.6 L488.3,34.9 C489.2,35.8 488.6,37.2 487.2,37.7 C484.8,38.6 482.2,39 480,40.2 C478.4,41.2 475.8,41.8 474.3,41.2 Z" fill="#f6eecc" stroke="#5e5040" stroke-width="0.9"/>
<path d="M479.5,29.5 L482.3,25.6 M482.2,30.2 L485.2,25.2 M484.6,30.8 L487.8,26" stroke="#5e5040" stroke-width="0.8" fill="none"/>
<!-- zoom -->
<line x1="511.2" y1="35.2" x2="505.6" y2="40.8" stroke="#1e1e1e" stroke-width="2.8" stroke-linecap="round"/>
<circle cx="516.1" cy="30.2" r="5.1" fill="#94bce2" stroke="#22262c" stroke-width="1.2"/>
<circle cx="516.3" cy="30" r="2.6" fill="#b4d2ee"/>
<!-- zoom extents -->
<line x1="542.6" y1="36" x2="537.2" y2="41" stroke="#1a1a1a" stroke-width="2.3" stroke-linecap="round"/>
<g transform="translate(545.6,32.9)" fill="#d41838" stroke="#4a0810" stroke-width="0.6" stroke-linejoin="round">
<path transform="rotate(-137)" d="M5.2,-1.3 L8.2,-1.3 L8.2,-3.2 L12.6,0 L8.2,3.2 L8.2,1.3 L5.2,1.3 Z"/>
<path transform="rotate(-43)" d="M5.2,-1.3 L8.2,-1.3 L8.2,-3.2 L12.6,0 L8.2,3.2 L8.2,1.3 L5.2,1.3 Z"/>
<path transform="rotate(44)" d="M5.2,-1.3 L8.2,-1.3 L8.2,-3.2 L12.6,0 L8.2,3.2 L8.2,1.3 L5.2,1.3 Z"/>
</g>
<circle cx="545.6" cy="33" r="4.1" fill="#a4c4e4" stroke="#2e3238" stroke-width="1.1"/>
<circle cx="545.7" cy="32.9" r="1.8" fill="#c0d8f0"/>
<!-- 3d warehouse -->
<path d="M567.4,30.4 L571.2,29.2 L573.6,38.4 L569.8,37.2 Z" fill="#c4c4bc" stroke="#1a1a1a" stroke-width="1" stroke-linejoin="round"/>
<path d="M580.4,27 L585.6,32.2 L583.6,36.2 L579.4,31 Z" fill="#c4c4bc" stroke="#1a1a1a" stroke-width="1" stroke-linejoin="round"/>
<path d="M572.8,37.6 L574,40.4 L583.8,36.2 L582.6,33.6 Z" fill="#3a3a3a" stroke="#1a1a1a" stroke-width="1" stroke-linejoin="round"/>
<path d="M570.4,27.4 L577.8,25.6 L582.8,33.8 L573.6,38 Z" fill="#d42a3a" stroke="#3a0a10" stroke-width="1" stroke-linejoin="round"/>
<path d="M572.2,29 L577.2,27.6 L580.4,33 L574.6,35.6 Z" fill="#e44858"/>
<path d="M574.2,34.6 L573.4,31.4 L577.6,29.8 L578.2,31 L575.2,32.2 L575.6,33.2 L578.6,32 L579.2,33.2 Z" fill="#f8d8d8"/>
<!-- extension warehouse -->
<path d="M599.4,25.8 L610.6,24.2 L617.3,29.8 L613.8,38.4 L603,42.3 Z" fill="#e02a36" stroke="#e02a36" stroke-width="0.6" stroke-linejoin="round"/>
<path d="M601.4,27.9 L610.2,27.1 C611.3,27.1 611.6,28 611.5,29 L611.2,31.4 L601.9,31.9 Z" fill="#fbf0f0"/>
<path d="M602.6,32.7 L611,32.2 L610.7,35.3 L607.2,35.6 L607.5,38.9 L603.4,39.5 Z" fill="#fbf0f0"/>
<!-- extension manager -->
<path d="M631.6,25.8 L642.8,24.2 L649.5,29.8 L646,38.4 L635.2,42.3 Z" fill="#e02a36" stroke="#e02a36" stroke-width="0.6" stroke-linejoin="round"/>
<path d="M633.6,27.9 L642.4,27.1 C643.5,27.1 643.8,28 643.7,29 L643.4,31.4 L634.1,31.9 Z" fill="#fbf0f0"/>
<path d="M634.8,32.7 L643.2,32.2 L642.9,35.3 L639.4,35.6 L639.7,38.9 L635.6,39.5 Z" fill="#fbf0f0"/>
<circle cx="646.5" cy="39.8" r="4.6" fill="#dcdcdc"/>
<circle cx="646.5" cy="39.8" r="3.2" fill="#e02a36" stroke="#e02a36" stroke-width="1.8" stroke-dasharray="1.15 1.1"/>
<circle cx="646.5" cy="39.8" r="1.3" fill="#f4b8b8"/>
<!-- layout -->
<path d="M662.9,28.3 L675.1,25 L680.6,36.6 L666.2,40.5 Z" fill="#f8e8ea" stroke="#e85060" stroke-width="1.1" stroke-linejoin="round"/>
<path d="M664.8,30 L675,27.4 M665.4,32.2 L672.6,30.4 L674.5,35 M666.6,35 L667.8,39" fill="none" stroke="#e85060" stroke-width="1.1"/>
<path d="M670.2,35.6 L676,35.4 L676,33.4 L681.4,37.6 L676.4,41.8 L676.3,39.8 L670.5,40 Z" fill="#2a8ae4" stroke="#10305a" stroke-width="0.8" stroke-linejoin="round"/>
</svg>

<svg id="sb" width="777" height="469" viewBox="0 0 777 469" style="position:absolute;left:0;top:0">
<circle cx="11.3" cy="457" r="6.2" fill="none" stroke="#a6a6a6" stroke-width="1.3"/>
<path d="M11.3,460.9 L9,455.4 A2.5,2.5 0 1 1 13.6,455.4 Z" fill="#9c9c9c"/>
<circle cx="30.4" cy="457" r="6.2" fill="none" stroke="#161616" stroke-width="1.4"/>
<circle cx="30.4" cy="453.5" r="0.95" fill="#111"/>
<path d="M30.4,455 C31.4,455 31.8,455.8 31.7,456.6 L31.1,457.3 L31.1,460.8 L29.7,460.8 L29.7,457.3 L29.1,456.6 C29,455.8 29.4,455 30.4,455 Z" fill="#111"/>
<circle cx="49.7" cy="456.8" r="6.2" fill="none" stroke="#161616" stroke-width="1.4"/>
<circle cx="49.7" cy="455" r="2.4" fill="#111"/>
<path d="M45.2,462 L45.6,459.2 C45.8,458.6 46.4,458.3 47,458.3 L52.4,458.3 C53,458.3 53.6,458.6 53.8,459.2 L54.2,462 C52.8,463.2 46.6,463.2 45.2,462 Z" fill="#111"/>
<line x1="60.4" y1="449" x2="60.4" y2="465" stroke="#dcdcdc" stroke-width="1"/>
<circle cx="71.1" cy="456.8" r="6.6" fill="#24508f" stroke="#0e1a34" stroke-width="1.2"/>
<path d="M68.9,455 C68.9,453.2 70,452.6 71.2,452.6 C72.6,452.6 73.5,453.4 73.5,454.6 C73.5,456.2 71.6,456.4 71.6,458" fill="none" stroke="#0c1630" stroke-width="1.4"/>
<circle cx="71.6" cy="460.2" r="0.9" fill="#0c1630"/>
<g transform="translate(0.4,0.6)" opacity="0.35"><path d="M462.2,451.3 L462.4,463.2 L465.3,460.6 L467.6,465.4 L470,464.3 L467.8,459.6 L471.6,459.2 Z" fill="#555" stroke="#555" stroke-width="1.2" stroke-linejoin="round"/></g>
<path d="M462.2,451.3 L462.4,463.2 L465.3,460.6 L467.6,465.4 L470,464.3 L467.8,459.6 L471.6,459.2 Z" fill="#fff" stroke="#6a6a6a" stroke-width="0.8" stroke-linejoin="round"/>
<path d="M463.2,453.6 L463.3,461 L465.6,459 L467.9,463.8 L468.8,463.4 L466.6,458.6 L469.6,458.4 Z" fill="#000"/>
</svg>

</body></html>
